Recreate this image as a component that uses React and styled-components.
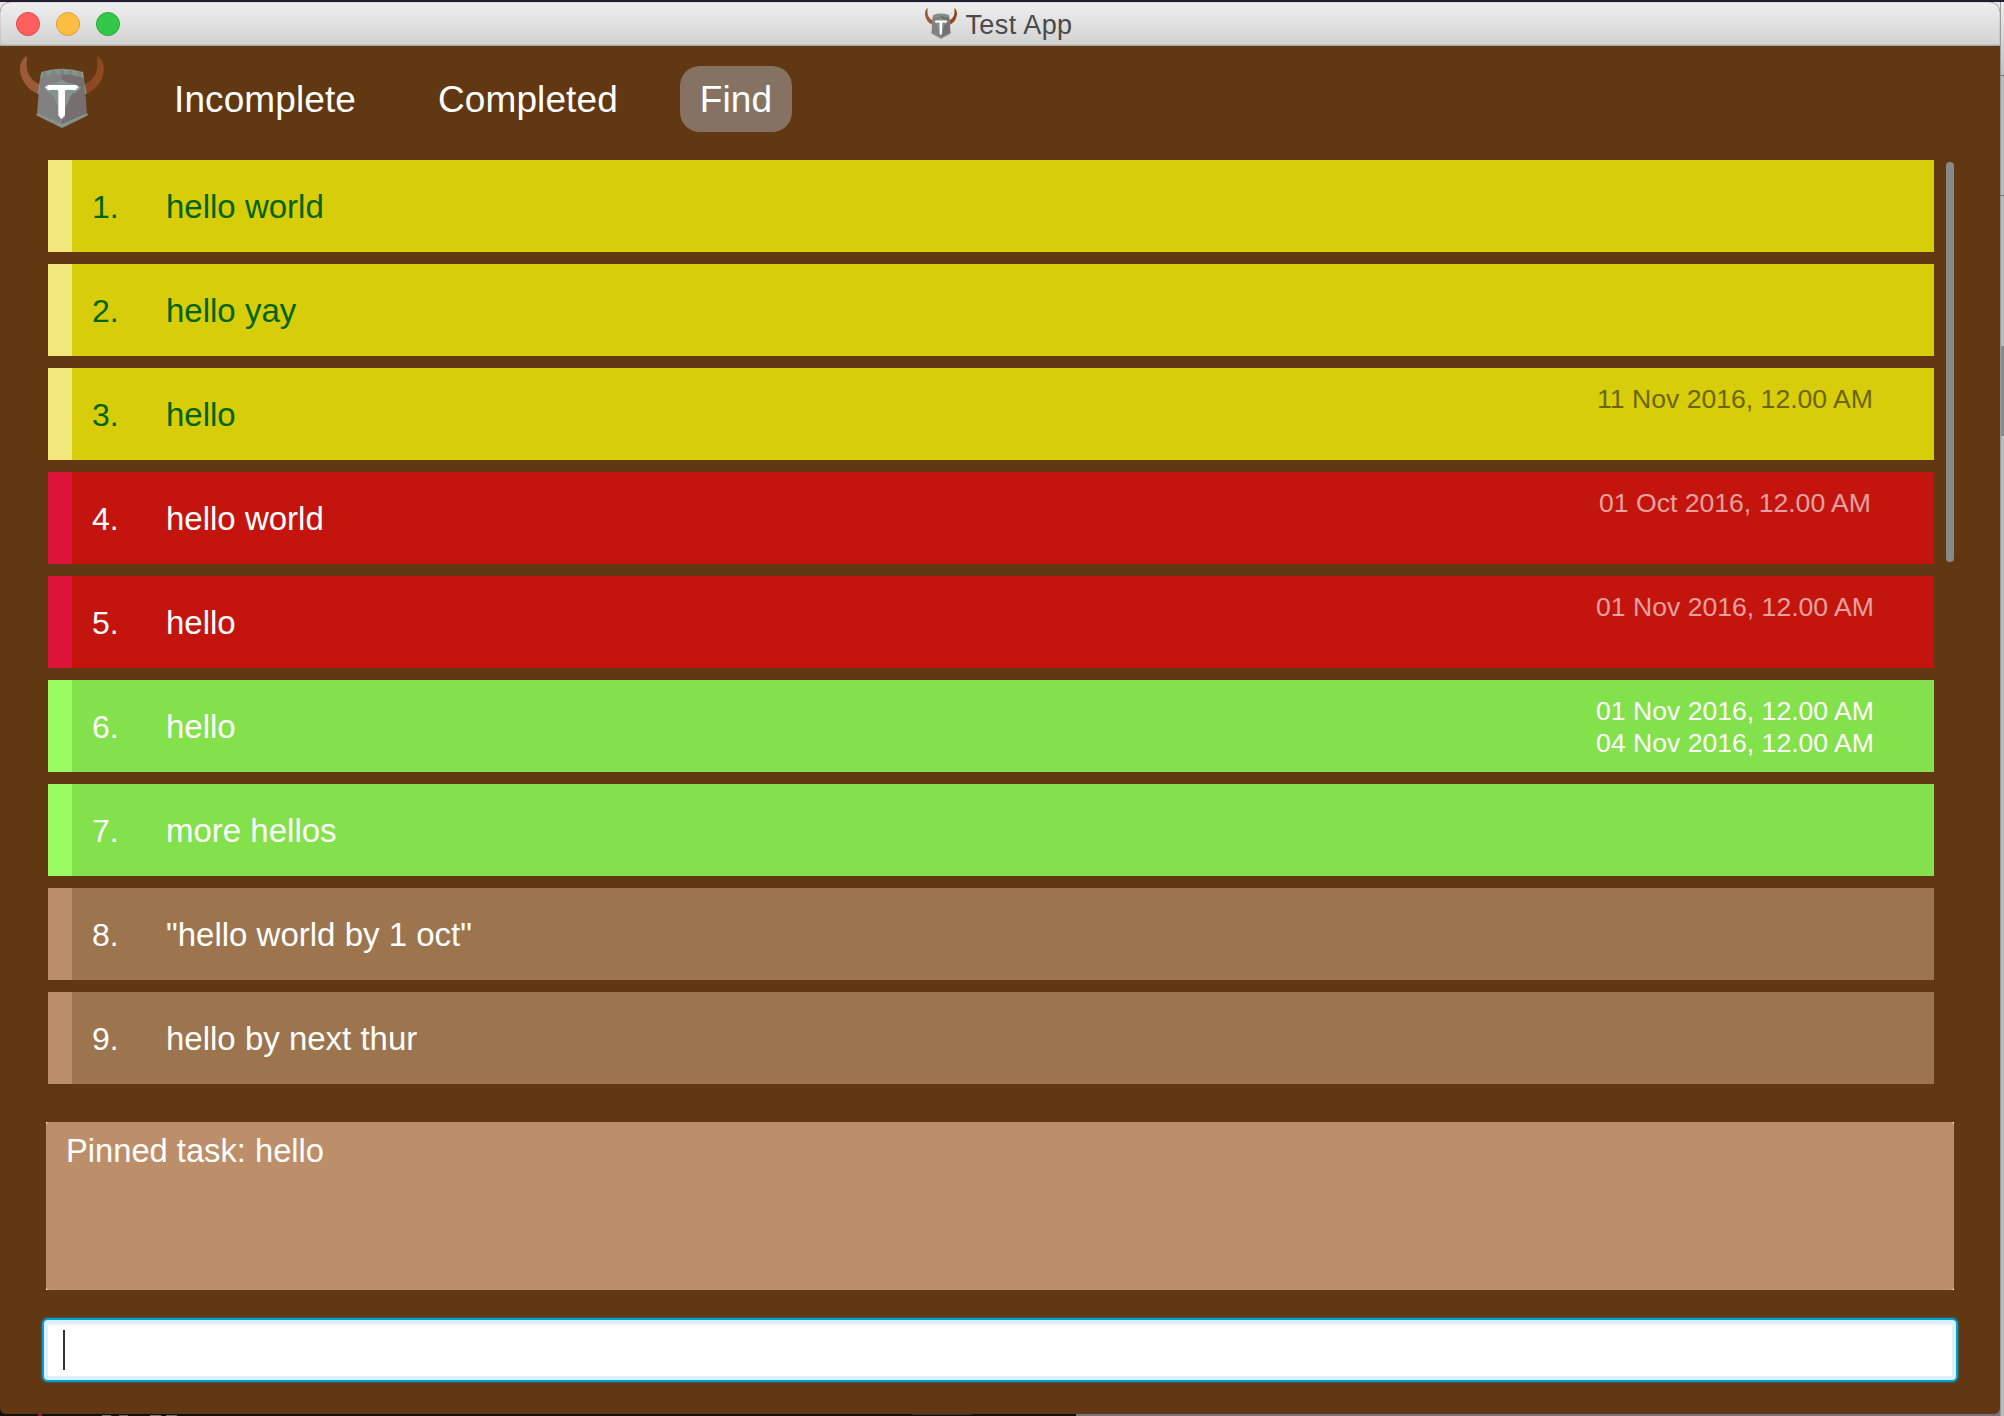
import React from "react";
import styled, { createGlobalStyle } from "styled-components";

const Global = createGlobalStyle`
  *{box-sizing:border-box}
  html,body{margin:0;padding:0}
  body{width:2004px;height:1416px;overflow:hidden;background:#151515;font-family:"Liberation Sans",Arial,sans-serif}
`;

const Desktop = styled.div`
  width:2004px;height:1416px;padding:2px 4px 2px 0;
  background:
    linear-gradient(#201d33,#201d33) 0 0/100% 2px no-repeat,
    linear-gradient(#e4e4e4,#e4e4e4) 0 2px/12px 12px no-repeat,
    linear-gradient(#e4e4e4,#e4e4e4) 1988px 2px/12px 12px no-repeat,
    linear-gradient(#777,#777) 2000px 75px/4px 1px no-repeat,
    linear-gradient(#777,#777) 2000px 195px/4px 1px no-repeat,
    linear-gradient(#8b8b8b,#8b8b8b) 2001px 346px/3px 90px no-repeat,
    linear-gradient(#eee,#bfbfbf) 2001px 2px/3px 74px no-repeat,
    linear-gradient(90deg,#8c8c8c,#bdbdbd 40%) 2000px 2px/4px 1414px no-repeat,
    linear-gradient(#8a1c48,#8a1c48) 38px 1414px/4px 2px no-repeat,
    linear-gradient(#777,#777) 102px 1415px/9px 1px no-repeat,
    linear-gradient(#667,#667) 119px 1415px/9px 1px no-repeat,
    linear-gradient(#777,#777) 150px 1415px/11px 1px no-repeat,
    linear-gradient(#677,#677) 166px 1415px/11px 1px no-repeat,
    linear-gradient(#333,#333) 912px 1414px/60px 1px no-repeat,
    linear-gradient(90deg,#111 1076px,#77737a 1076px) 0 0/100% 100%;
`;
const Window = styled.div`
  height:1412px;background:#623813;display:flex;flex-direction:column;
  border-radius:10px 10px 6px 6px;overflow:hidden;
`;
const TitleBar = styled.div`
  height:44px;flex:none;display:grid;grid-template-columns:1fr auto 1fr;align-items:center;
  background:linear-gradient(#efefef,#d2d2d2);border-bottom:1px solid #a9a7a5;padding:0 18px 0 16px;
  border-radius:10px 10px 0 0;box-shadow:inset 0 0 0 1px rgba(150,150,150,.25);
`;
const Lights = styled.div`display:flex;gap:16px;`;
const Light = styled.span`
  width:24px;height:24px;border-radius:50%;background:${p => p.$fill};border:1px solid ${p => p.$edge};
`;
const Title = styled.div`
  display:flex;align-items:center;gap:8px;font-size:27px;line-height:30px;color:#4a4a4a;
  padding-top:2px;letter-spacing:.45px;
`;
const TitleLogo = styled.div`width:32px;height:31px;display:flex;margin-top:-2px;`;
const Nav = styled.nav`
  display:flex;height:114px;flex:none;padding:8px 0 0 18px;
`;
const NavLogo = styled.div`width:88px;height:76px;display:flex;`;
const Tabs = styled.div`display:flex;gap:42px;margin:12px 0 0 48px;`;
const Tab = styled.div`
  height:66px;padding:0 20px;border-radius:20px;line-height:68px;font-size:37px;color:#fff;
  letter-spacing:.1px;background:${p => (p.$active ? "#857262" : "transparent")};
`;
const Body = styled.div`display:flex;gap:12px;padding-left:48px;height:924px;flex:none;`;
const List = styled.div`width:1886px;display:flex;flex-direction:column;gap:12px;`;
const Scroll = styled.div`width:8px;height:400px;margin-top:2px;border-radius:4px;background:#898989;`;

const tones = {
  yellow: { bg: "#d7cd0b", edge: "#f0e87a", text: "#006400", date: "#6b6605" },
  red: { bg: "#c3150e", edge: "#dc143c", text: "#fff", date: "#e7a19f" },
  green: { bg: "#83e14b", edge: "#98fb62", text: "#fff", date: "#fff" },
  brown: { bg: "#9c754f", edge: "#bc8f6b", text: "#fff", date: "#fff" },
};
const Row = styled.div`
  height:92px;display:flex;border-left:24px solid ${p => tones[p.$tone].edge};
  background:${p => tones[p.$tone].bg};color:${p => tones[p.$tone].text};
  font-size:33px;line-height:94px;padding:0 59.5px 0 20px;
`;
const Num = styled.span`width:74px;font-size:32px;`;
const Name = styled.span`flex:1;`;
const Dates = styled.div`
  padding-top:15px;font-size:26.6px;line-height:32px;text-align:center;
  width:279px;white-space:nowrap;color:${p => tones[p.$tone].date};
`;
const Pinned = styled.div`
  height:168px;flex:none;margin:38px 46px 28px;background:#fff;display:flex;
`;
const PinnedText = styled.div`
  flex:1;background:#bc8f6a;color:#fff;border-radius:3px;
  font-size:32.7px;line-height:38px;padding:10px 20px;
`;
const Field = styled.div`
  height:64px;flex:none;margin:0 42px;border:2px solid #039ed3;border-radius:6px;background:#fff;
  box-shadow:0 0 2px #039ed3,inset 0 0 0 4px #dbf1f9,inset 0 7px 3px -1px #f4f4f4;
  display:flex;align-items:center;padding-left:19px;
`;
const Caret = styled.span`width:2px;height:40px;background:#333;`;

const rivets = [[92, 73], [118, 69], [144, 66], [170, 69], [196, 73]];

const Logo = ({ viewBox = "12 12 264 228" }) => (
  <svg viewBox={viewBox} width="100%" height="100%" preserveAspectRatio="none">
    <path d="M38 17C22 28 15 48 19 67C24 98 45 121 72 132L76 102C55 94 43 78 39 58C36 42 40 28 38 17Z" fill="#9d5a38" />
    <path d="M250 17C266 28 273 48 269 67C264 98 243 121 217 132L212 102C233 94 245 78 249 58C252 42 248 28 250 17Z" fill="#8f4821" />
    <path d="M79 80L73 118L71 130L74 131L69 192L144 224V70Z" fill="#828080" />
    <path d="M209 80L215 118L218 130L214 131L219 192L144 224V70Z" fill="#766f6e" />
    <path d="M75 104L71 132L75 131L78 104ZM213 104L218 132L213 131L210 104Z" fill="#869490" />
    <path d="M82 66Q144 46 207 66L210 84Q144 61 78 84Z" fill="#869490" />
    <g fill="none" stroke="#6c7773" strokeWidth="2.5">
      {rivets.map(([x, y]) => <circle key={x} cx={x} cy={y} r="4.5" />)}
    </g>
    <path d="M69 190L144 222L219 190L222 196L144 234L67 196Z" fill="#869490" />
    <path d="M88 113Q97 101 128 98L144 89L160 98Q190 101 202 113Q192 126 174 132Q168 137 165 150Q162 160 154 170L152 204L144 209L135 204L133 170Q126 160 123 150Q120 137 113 132Q97 126 88 113Z" fill="#869490" />
    <path d="M93 112L103 105H187L194 112L184 121Q166 117 153 121V196L142 207L133 196V121Q118 117 103 121Z" fill="#fff" />
  </svg>
);

const tasks = [
  ["hello world", "yellow"],
  ["hello yay", "yellow"],
  ["hello", "yellow", "11 Nov 2016, 12.00 AM"],
  ["hello world", "red", "01 Oct 2016, 12.00 AM"],
  ["hello", "red", "01 Nov 2016, 12.00 AM"],
  ["hello", "green", "01 Nov 2016, 12.00 AM", "04 Nov 2016, 12.00 AM"],
  ["more hellos", "green"],
  ['"hello world by 1 oct"', "brown"],
  ["hello by next thur", "brown"],
];

export default function App() {
  return (
    <Desktop>
      <Global />
      <Window>
        <TitleBar>
          <Lights>
            <Light $fill="#fd605d" $edge="#e04846" />
            <Light $fill="#fdbe41" $edge="#dea035" />
            <Light $fill="#34c84a" $edge="#27a934" />
          </Lights>
          <Title><TitleLogo><Logo viewBox="18 17 252 217" /></TitleLogo>Test App</Title>
        </TitleBar>
        <Nav>
          <NavLogo><Logo /></NavLogo>
          <Tabs>
            <Tab>Incomplete</Tab>
            <Tab>Completed</Tab>
            <Tab $active>Find</Tab>
          </Tabs>
        </Nav>
        <Body>
          <List>
            {tasks.map(([name, tone, ...dates], i) => (
              <Row key={i} $tone={tone}>
                <Num>{i + 1}.</Num>
                <Name>{name}</Name>
                {dates.length > 0 && (
                  <Dates $tone={tone}>{dates.map(d => <div key={d}>{d}</div>)}</Dates>
                )}
              </Row>
            ))}
          </List>
          <Scroll />
        </Body>
        <Pinned><PinnedText>Pinned task: hello</PinnedText></Pinned>
        <Field><Caret /></Field>
      </Window>
    </Desktop>
  );
}
